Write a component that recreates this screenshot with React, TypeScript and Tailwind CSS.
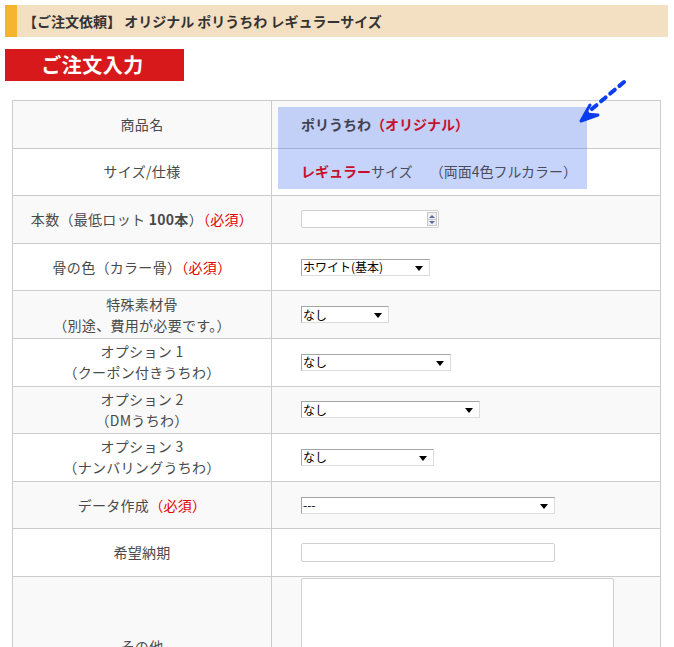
const FONT = "font-['Noto_Sans_CJK_JP','Noto_Sans',sans-serif]";

function FakeSelect({ width, text }: { width: string; text: string }) {
  return (
    <div
      className={`${width} h-[17px] flex items-center justify-between bg-white border border-t-[#a5a5a5] border-l-[#a5a5a5] border-r-[#dcdcdc] border-b-[#dcdcdc] pl-[1px] pr-[6px] text-[12px] leading-none text-black`}
    >
      <span>{text}</span>
      <span className="w-0 h-0 border-l-[4px] border-r-[4px] border-t-[5px] border-l-transparent border-r-transparent border-t-black mt-[2px]" />
    </div>
  );
}

function Req() {
  return <span className="text-[#e00000]">（必須）</span>;
}

type Row = { label: React.ReactNode; field: React.ReactNode; tall?: boolean };

export default function App() {
  const rows: Row[] = [
    {
      label: "商品名",
      field: (
        <span className="relative z-10 font-bold text-[#3f4152]">
          ポリうちわ<span className="text-[#c8102e]">（オリジナル）</span>
        </span>
      ),
    },
    {
      label: "サイズ/仕様",
      field: (
        <span className="relative z-10 text-[#4a4d5c]">
          <span className="font-bold text-[#c8102e]">レギュラー</span>サイズ　 （両面4色フルカラー）
        </span>
      ),
    },
    {
      label: (
        <>
          本数（最低ロット <b>100本</b>）<Req />
        </>
      ),
      field: (
        <div className="w-[138px] h-[18px] flex justify-end bg-white border border-[#d0d0d0] rounded-[2px] p-[1px]">
          <div className="w-[10px] flex flex-col border border-[#c8c8c8] bg-[#eef0f4]">
            <div className="flex-1 flex items-center justify-center border-b border-[#c8c8c8]">
              <span className="w-0 h-0 border-l-[3px] border-r-[3px] border-b-[3px] border-l-transparent border-r-transparent border-b-[#5a6aa0]" />
            </div>
            <div className="flex-1 flex items-center justify-center">
              <span className="w-0 h-0 border-l-[3px] border-r-[3px] border-t-[3px] border-l-transparent border-r-transparent border-t-[#5a6aa0]" />
            </div>
          </div>
        </div>
      ),
    },
    {
      label: (
        <>
          骨の色（カラー骨）<Req />
        </>
      ),
      field: <FakeSelect width="w-[129px]" text="ホワイト(基本)" />,
    },
    {
      label: (
        <>
          特殊素材骨
          <br />
          （別途、費用が必要です。）
        </>
      ),
      field: <FakeSelect width="w-[88px]" text="なし" />,
    },
    {
      label: (
        <>
          オプション 1
          <br />
          （クーポン付きうちわ）
        </>
      ),
      field: <FakeSelect width="w-[150px]" text="なし" />,
    },
    {
      label: (
        <>
          オプション 2
          <br />
          （DMうちわ）
        </>
      ),
      field: <FakeSelect width="w-[179px]" text="なし" />,
    },
    {
      label: (
        <>
          オプション 3
          <br />
          （ナンバリングうちわ）
        </>
      ),
      field: <FakeSelect width="w-[133px]" text="なし" />,
    },
    {
      label: (
        <>
          データ作成<Req />
        </>
      ),
      field: <FakeSelect width="w-[254px]" text="---" />,
    },
    {
      label: "希望納期",
      field: <div className="w-[254px] h-[19px] bg-white border border-[#d0d0d0] rounded-[2px]" />,
    },
    {
      label: "その他",
      tall: true,
      field: <div className="w-[313px] h-[132px] bg-white border border-[#d0d0d0] rounded-[2px]" />,
    },
  ];

  return (
    <div className={`relative w-[674px] h-[647px] overflow-hidden bg-white ${FONT}`}>
      <div className="pt-[5px] pl-[5px]">
        {/* header */}
        <div className="w-[663px] h-[32px] flex items-center bg-[#f3dfc1] border-l-[12px] border-[#f6b52e] pl-[6px] text-[14px] font-bold text-[#333]">
          【ご注文依頼】 オリジナル ポリうちわ レギュラーサイズ
        </div>

        {/* red banner */}
        <div className="mt-[12px] w-[179px] h-[32px] flex items-center justify-center bg-[#d7191c] text-white text-[20px] font-bold tracking-[0.5px] pr-[4px]">
          ご注文入力
        </div>
      </div>

      {/* table */}
      <div className="mt-[19px] ml-[12px] w-[649px] border-t border-l border-[#cccccc] text-[14px] text-[#4a4a4a]">
        {rows.map((r, i) => (
          <div
            key={i}
            className={`flex border-b border-[#cccccc] ${r.tall ? "h-[140px]" : "h-[47.6px]"} ${i % 2 === 0 ? "bg-[#f9f9f9]" : "bg-white"}`}
          >
            <div className="w-[259px] shrink-0 flex items-center justify-center text-center leading-[21px] tracking-[0.3px] border-r border-[#cccccc]">
              <div>{r.label}</div>
            </div>
            <div
              className={`flex-1 flex ${r.tall ? "items-start pt-[1px]" : "items-center"} pl-[29px] border-r border-[#cccccc]`}
            >
              {r.field}
            </div>
          </div>
        ))}
      </div>

      {/* highlight overlay */}
      <div className="absolute left-[278px] top-[107px] w-[309px] h-[82px] bg-[rgba(65,108,240,0.3)] pointer-events-none" />

      {/* dashed arrow */}
      <svg className="absolute left-[570px] top-[76px] pointer-events-none" width="60" height="52" viewBox="0 0 60 52">
        <path
          d="M54 6 L16 38"
          stroke="#0a3cf0"
          strokeWidth="4"
          strokeLinecap="round"
          strokeDasharray="6 6"
          fill="none"
        />
        <path
          d="M11 45 L20 29 L15 38 L28 39 Z"
          fill="#0a3cf0"
          stroke="#0a3cf0"
          strokeWidth="3"
          strokeLinejoin="round"
        />
      </svg>
    </div>
  );
}
